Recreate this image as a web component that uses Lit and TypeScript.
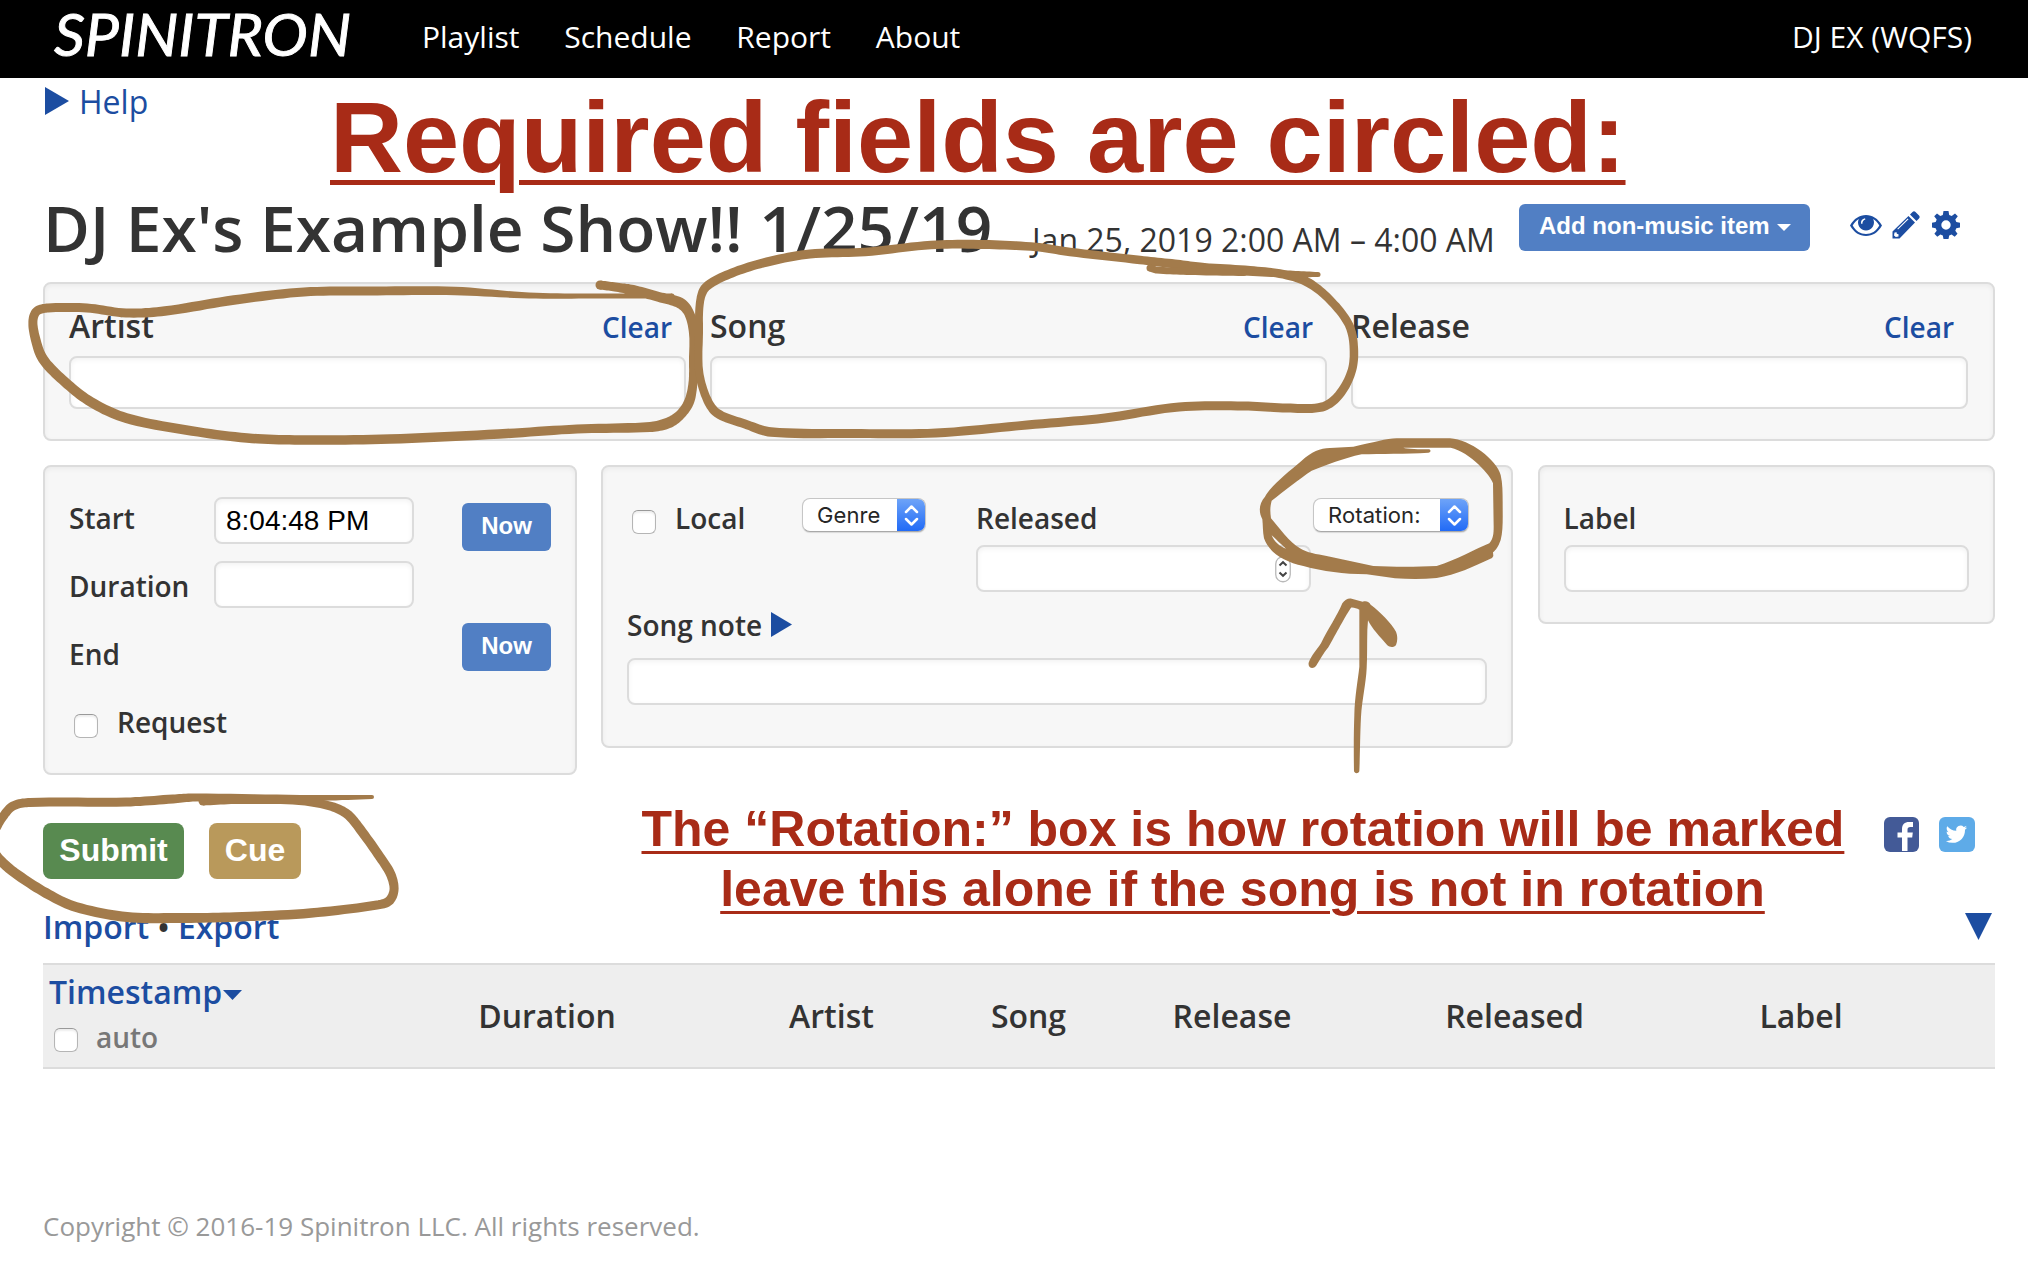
import { LitElement, html, css, svg } from "lit";
import { customElement, property } from "lit/decorators.js";

type Pt = [number, number, number];

/* Hand-drawn strokes: x, y and pen width at each point. */
const STROKES: Pt[][] = [
  [[600, 285, 9], [615, 287, 9], [633, 290, 10], [659, 297, 10], [680, 303, 11], [689, 313, 10], [694, 333, 10], [694, 360, 10], [693, 383, 9], [689, 402, 10], [680, 415, 10], [668, 423, 11], [650, 427, 10], [577, 429, 9], [499, 434, 9.5], [390, 439, 9.5], [300, 440, 9.5], [247, 438, 9.5], [186, 430, 9.5], [126, 418, 10], [91, 402, 10], [65, 382, 10], [43, 359, 10], [35, 337, 9.5], [33, 320, 9], [37, 311, 9], [48, 308, 9], [87, 308, 9], [126, 313, 9], [165, 311, 9.5], [234, 300, 9.5], [304, 292, 9], [369, 291, 9], [455, 291, 8.5], [529, 295.5, 6], [600, 296, 5], [672, 296, 5]],
  [[1318, 274.5, 5], [1290, 274, 7], [1244, 271, 9], [1200, 267, 9], [1175, 264, 9], [1140, 260, 8.5], [1070, 252, 8.5], [1036, 247, 8.500], [984, 244.5, 9], [931, 245, 8.5], [865, 252, 8.5], [810, 254, 9], [767, 262, 9], [732, 273, 9], [706, 287, 9], [700, 302, 8], [699, 333, 8], [699, 370, 8], [706, 397, 8.5], [717, 413, 9], [745, 424, 9], [771, 432, 9.5], [853, 433.5, 9], [936, 433, 9], [1027, 425, 9], [1105, 418, 9], [1179, 407, 9], [1244, 406, 9], [1287, 408, 9], [1322, 407, 9], [1339, 395, 9], [1352, 370, 8.5], [1353.5, 343, 8.5], [1348, 323, 8.5], [1330, 300, 8.500], [1309, 283, 9], [1287, 275, 9], [1250, 270, 8], [1200, 267, 8]],
  [[1150, 268, 7], [1157, 270, 7], [1190, 271.5, 7], [1244, 273, 6]],
  [[372, 797, 4], [312, 798, 6], [195, 797.500, 8], [173, 799, 9], [126, 802, 9], [30, 802.5, 9], [13, 806, 9], [2, 818, 9], [-6, 832, 9]],
  [[203, 801, 9], [238, 800, 8], [299, 801, 8], [330, 806, 9], [347, 814, 9.5], [360, 829, 9.5], [382, 860, 9.5], [391, 875, 9.500], [394, 890, 9], [389, 901, 9.5], [377, 905, 9], [311, 913, 9.5], [235, 917, 9.5], [180, 918, 10], [127, 917, 10], [76, 907, 10], [46, 893, 10], [15, 873, 10], [0, 860, 10], [-8, 850, 10]],
];

/* The ring and arrow around the rotation menu, drawn at three times their size. */
const RING = `M340 50C400 38 440 25 470 25L630 25C690 28 770 90 782 135C788 160 788 190 788 215C788 260 790 300 782 330C775 350 768 360 759 367L760 378Q757 387 748 388C700 410 650 435 590 444C550 448 510 448 465 445L380 433C310 432 250 424 190 408C130 395 85 365 72 325C68 305 69 285 67 268C55 245 57 220 75 200C90 170 140 130 185 92C215 65 240 55 270 54Z
M365 73C310 85 260 105 215 122C180 145 130 185 95 212C90 230 90 245 93 265C115 290 150 340 180 355C200 368 230 373 260 378L400 408C460 411 530 411 590 408C650 390 710 355 748 340C760 325 761 310 761 290L759 160C755 140 690 65 632 53L490 53C500 57 540 58 568 58C574 62 572 67 565 68C500 72 420 71 365 73Z
M95 316C105 325 125 345 138 356C120 350 102 335 95 316Z`;
const ARROW = `M206 698C215 675 230 660 243 640C265 595 290 560 307 520C315 508 325 504 335 506L368 515C380 512 388 516 392 524C420 545 455 580 468 605C474 620 472 635 468 645C462 653 450 653 442 646C420 620 395 595 384 571L382 600C381 640 382 680 380 715C378 760 366 810 363 860C360 920 360 980 358 1024C355 1032 345 1032 342 1024C341 970 341 910 343 855C344 800 354 750 358 710L358 539C350 536 342 532 333 533C315 560 300 590 265 652C250 670 240 690 228 708C220 718 203 715 206 698Z`;

/* Run a smooth curve through the points and return the outline of the pen. */
function outline(pts: Pt[]): string {
  const n = pts.length;
  const dist = (a: Pt, b: Pt) => Math.hypot(a[0] - b[0], a[1] - b[1]);
  const slope = pts.map((_, i) => {
    const p = pts[Math.max(0, i - 1)], c = pts[i], q = pts[Math.min(n - 1, i + 1)];
    const len = dist(p, c) + dist(c, q);
    return [0, 1, 2].map((j) => (q[j] - p[j]) / len);
  });
  const s: Pt[] = [];
  for (let i = 0; i < n - 1; i++) {
    const a = pts[i], b = pts[i + 1], d = dist(a, b);
    for (let k = 0; k < 10; k++) {
      const t = k / 10, t2 = t * t, t3 = t2 * t;
      s.push([0, 1, 2].map((j) =>
        (2 * t3 - 3 * t2 + 1) * a[j] + (t3 - 2 * t2 + t) * d * slope[i][j] +
        (3 * t2 - 2 * t3) * b[j] + (t3 - t2) * d * slope[i + 1][j]) as Pt);
    }
  }
  s.push(pts[n - 1]);
  const f = (v: number) => v.toFixed(1);
  const l: string[] = [], r: string[] = [];
  s.forEach((p, i) => {
    const q = s[Math.max(0, i - 1)], e = s[Math.min(s.length - 1, i + 1)];
    const dx = e[0] - q[0], dy = e[1] - q[1], d = Math.hypot(dx, dy) || 1, w = p[2] / 2;
    l.push(`${f(p[0] - (dy / d) * w)} ${f(p[1] + (dx / d) * w)}`);
    r.unshift(`${f(p[0] + (dy / d) * w)} ${f(p[1] - (dx / d) * w)}`);
  });
  return `M${l.concat(r).join("L")}Z`;
}

@customElement("mac-select")
class MacSelect extends LitElement {
  @property() label = "";
  static styles = css`
    :host { display: block; }
    .box { display: flex; height: 34px; box-sizing: border-box; background: #fff; border-radius: 8px; border: 1px solid #c6c6c6; border-bottom-color: #a9a9a9; box-shadow: 0 1px 1px rgba(0,0,0,.12); overflow: hidden; justify-content: space-between; }
    .text { font: 22px/47px Inter, sans-serif; margin-top: -7px; color: #262626; padding-left: 14px; letter-spacing: .1px; white-space: nowrap; }
    .knob { width: 29px; background: linear-gradient(#70a5f8, #1f69f6); margin: -1px; height: 34px; }
  `;
  render() {
    return html`<div class="box"><span class="text">${this.label}</span>
      <svg class="knob" viewBox="0 0 29 34"><path d="M9 14 14.5 8.5 20 14M9 21 14.5 26.5 20 21" fill="none" stroke="#fff" stroke-width="2.5" stroke-linecap="round" stroke-linejoin="round"/></svg></div>`;
  }
}

@customElement("app-root")
class AppRoot extends LitElement {
  static styles = css`
    :host { display: block; position: relative; width: 2028px; height: 1284px; overflow: hidden; background: #fff; color: #333; font: 600 32px/44px "Open Sans", sans-serif; }
    * { box-sizing: border-box; }
    a { color: #1c4da1; text-decoration: none; }
    svg { display: block; }
    header { display: flex; background: #000; height: 78px; padding-left: 50px; }
    header a { color: #fff; font-weight: 400; font-size: 30px; line-height: 73px; }
    .logo { width: 310px; height: 78px; margin-right: 62px; fill: #fff; stroke: #fff; stroke-width: .9px; font: italic 400 58px Lato, sans-serif; flex: none; }
    nav { display: flex; gap: 44.8px; flex: 1; }
    .user { padding-right: 56px; }
    main { padding: 0 33px 0 43px; }
    .help { display: flex; height: 48px; line-height: 48px; gap: 10px; font-weight: 400; padding-left: 2px; margin-bottom: 61px; }
    .help svg { margin-top: 9px; }
    .title { display: grid; grid-template-columns: 989px 487px 331px auto; height: 80px; margin-bottom: 15px; align-items: baseline; }
    h1 { margin: 0; font-size: 64px; line-height: 81px; font-weight: 600; white-space: nowrap; }
    .date { font-weight: 400; white-space: nowrap; }
    .btn { background: #517fc4; color: #fff; border-radius: 6px; font: bold 24px/48px "Liberation Sans", Arial, sans-serif; text-align: center; white-space: nowrap; }
    .add { align-self: start; margin-top: 17px; width: 291px; height: 47px; line-height: 43px; display: flex; padding-left: 20px; gap: 7px; }
    .add svg { margin-top: 20px; }
    .tools { align-self: start; margin-top: 24px; display: flex; fill: #1c4da1; }
    .tools svg + svg { margin-left: 10px; }
    .tools svg:last-child { margin-left: 12px; }
    .panel { background: #f7f7f7; border: 2px solid #dcdcdc; border-radius: 8px; box-shadow: inset 0 2px 5px rgba(0,0,0,.05); padding: 17px 24px 0; }
    .field { background: #fff; border: 2px solid #dcdcdc; border-radius: 8px; box-shadow: inset 0 2px 5px rgba(0,0,0,.05); height: 47px; }
    .search { height: 159px; display: grid; grid-template-columns: repeat(3, 617px); gap: 24px; margin-bottom: 24px; padding-top: 20px; }
    .search .field { height: 53px; margin-top: 7px; }
    .cap { display: flex; justify-content: space-between; align-items: baseline; padding-right: 14px; }
    .cap a { font-size: 28px; }
    .lower { display: grid; grid-template-columns: 533.5px 912px 457.5px; gap: 24.5px; align-items: start; font-size: 28px; height: 352px; }
    .time { height: 310px; display: grid; grid-template-columns: 145px 200px 89px; }
    .time > :nth-child(3) { margin-left: 48px; width: 89px; }
    .row { height: 68px; line-height: 69px; white-space: nowrap; }
    .chk { display: flex; gap: 19px; padding-left: 5px; }
    .box { width: 24px; height: 24px; border: 1.5px solid #b5b5b5; border-top-color: #999; border-radius: 6px; background: #fff; box-shadow: inset 0 2px 2px rgba(0,0,0,.07); margin-top: 26px; flex: none; }
    .ins { padding-top: 13px; }
    .ins .field + .field { margin-top: 17px; }
    .start { font: 28px/43px "Liberation Sans", Arial, sans-serif; color: #000; padding-left: 10px; }
    .nows { padding-top: 19px; }
    .nows .btn { height: 48px; line-height: 45px; }
    .nows .btn + .btn { margin-top: 72px; }
    .mid { height: 283px; }
    .top { display: grid; grid-template-columns: 175px 174px 335px 156px; height: 108px; }
    .top mac-select { margin-top: 14px; }
    .genre { width: 124px; }
    .rot { margin-left: 2px; width: 156px; }
    .released .field { margin-top: -7px; padding: 9px 0 0 297px; }
    .note { display: flex; gap: 9px; line-height: 67px; height: 66px; }
    .note svg { margin-top: 20px; }
    .lab { height: 159px; }
    .lab .field { margin-top: -7px; }
    .actions { display: flex; height: 62px; margin-bottom: 26px; }
    .actions .btn { margin-top: 6px; height: 56px; border-radius: 8px; font-size: 32px; line-height: 55px; }
    .submit { background: #588a50; width: 141px; }
    .cue { background: #b9995b; width: 92px; margin-left: 25px; }
    .social { margin-left: auto; display: flex; gap: 20px; padding-right: 20px; }
    .io { display: flex; justify-content: space-between; height: 44px; margin-bottom: 14px; white-space: pre; }
    .io svg { margin: 8px 3px 0 0; }
    .table { height: 106px; background: #eee; border: solid #dcdcdc; border-width: 2px 0; display: grid; grid-template-columns: 318px 372px 197px 197px 210px 355px 218px; text-align: center; line-height: 102px; }
    .stamp { text-align: left; line-height: 44px; padding: 5px 0 0 6px; }
    .stamp a { display: flex; gap: 1px; }
    .stamp svg { margin-top: 20px; }
    .auto { display: flex; gap: 18px; padding-left: 5px; color: #777; font-size: 28px; line-height: 46px; }
    .auto .box { margin-top: 14px; }
    footer { font-size: 26px; font-weight: 400; color: #999; margin-top: 135px; line-height: 45px; }
    .ink { position: absolute; left: 0; top: 0; fill: #a37b4b; }
    .memo { position: absolute; color: #a82b17; font: bold 101px/110px "Liberation Sans", Arial, sans-serif; text-decoration: underline; white-space: nowrap; }
    .big { left: 330px; top: 82px; letter-spacing: -.04px; text-decoration-thickness: 5px; text-underline-offset: 8px; }
    .small { font-size: 50px; line-height: 60px; left: 641.5px; top: 799px; width: 1202px; text-align: center; text-decoration-thickness: 3px; text-underline-offset: 5px; }
  `;

  render() {
    const tri = (w: number, h: number, d: string) => html`<svg width=${w} height=${h} viewBox="0 0 ${w} ${h}" fill="#1c4da1"><path d=${d} /></svg>`;
    return html`
      <header>
        <svg class="logo" viewBox="0 0 310 78"><text x="4" y="55.5" textLength="297" lengthAdjust="spacingAndGlyphs">SPINITRON</text></svg>
        <nav><a>Playlist</a><a>Schedule</a><a>Report</a><a>About</a></nav>
        <a class="user">DJ EX (WQFS)</a>
      </header>
      <main>
        <a class="help">${tri(24, 28, "M0 0L24 14L0 28Z")}Help</a>
        <div class="title">
          <h1>DJ Ex's Example Show!! 1/25/19</h1>
          <span class="date">Jan 25, 2019 2:00 AM – 4:00 AM</span>
          <div class="btn add">Add non-music item<svg width="14" height="7" fill="#fff"><path d="M0 0H14L7 7Z" /></svg></div>
          <div class="tools">
            <svg width="32" height="28" viewBox="0 0 32 28"><path fill-rule="evenodd" d="M0 14.500C4 7.500 9.500 4 16 4S28 7.500 32 14.500C28 21.500 22.500 25 16 25S4 21.500 0 14.500ZM2.700 14.500C6 20.200 10.500 23 16 23S26 20.200 29.300 14.500C27.700 11.500 25.600 9.300 23.200 7.900A8 8 0 1 1 8.800 7.900C6.400 9.300 4.300 11.500 2.700 14.500ZM15 7.200A5 5 0 0 0 11 12.500L12.300 13C12.500 10.500 13.500 9 15.400 8.500Z"/></svg>
            <svg width="28" height="28" viewBox="0 0 28 28"><path fill-rule="evenodd" d="M20.500 1Q22 -.4 23.500 1L27 4.500Q28.300 6 27 7.500L24.500 10L18 3.500ZM16.500 5L23 11.500L7.500 27.500H.5V20.500ZM2.500 21.500L2 24.500L3.800 26L6.500 25.500V23.200L4.800 22.800L4.600 21.200ZM6 18.500L16.500 8.300L15.700 7.600L5.300 17.800Z"/></svg>
            <svg width="28" height="28" viewBox="0 0 28 28"><path fill-rule="evenodd" d="M11.500 0H16.500L17.200 4L19.700 5L23 2.500L25.800 5.200L23.300 8.500L24.300 11L28 11.700V16.500L24.300 17.200L23.300 19.700L25.500 22.800L22.700 25.700L19.600 23.400L17.200 24.400L16.500 28H11.500L10.800 24.400L8.400 23.400L5.300 25.700L2.400 22.800L4.700 19.700L3.700 17.200L0 16.500V11.700L3.700 11L4.700 8.500L2.200 5.200L5 2.500L8.300 5L10.800 4ZM14 9.300A4.700 4.700 0 1 0 14 18.700A4.700 4.700 0 1 0 14 9.300Z"/></svg>
          </div>
        </div>
        <section class="panel search">
          ${["Artist", "Song", "Release"].map((t) => html`<div><div class="cap"><span>${t}</span><a>Clear</a></div><div class="field"></div></div>`)}
        </section>
        <section class="lower">
          <div class="panel time">
            <div>
              <div class="row">Start</div><div class="row">Duration</div><div class="row">End</div>
              <div class="row chk"><i class="box"></i>Request</div>
            </div>
            <div class="ins"><div class="field start">8:04:48 PM</div><div class="field"></div></div>
            <div class="nows"><div class="btn">Now</div><div class="btn">Now</div></div>
          </div>
          <div class="panel mid">
            <div class="top">
              <div class="row chk"><i class="box"></i>Local</div>
              <mac-select class="genre" label="Genre"></mac-select>
              <div class="released"><div class="row">Released</div>
                <div class="field"><svg width="16" height="27" viewBox="0 0 16 27"><rect x=".75" y=".75" width="14.500" height="25" rx="7.200" fill="#fff" stroke="#b9b9b9" stroke-width="1.300"/><path d="M4.500 9.500L8 6.200L11.500 9.500M4.500 16.500L8 19.800L11.500 16.500" fill="none" stroke="#444" stroke-width="2"/></svg></div></div>
              <mac-select class="rot" label="Rotation:"></mac-select>
            </div>
            <div class="note">Song note${tri(21, 25, "M0 0L21 12.5L0 25Z")}</div>
            <div class="field"></div>
          </div>
          <div class="panel lab"><div class="row">Label</div><div class="field"></div></div>
        </section>
        <div class="actions">
          <div class="btn submit">Submit</div><div class="btn cue">Cue</div>
          <div class="social">
            <svg width="35" height="35" viewBox="0 0 35 35"><rect width="35" height="35" rx="6" fill="#435a97"/><path fill="#fff" d="M18 34V20.500H13.500V15.500H18V12C18 7.500 20.700 5 25 5H29V10H26.300C24.300 10 23.500 11 23.500 12.700V15.500H28.800L28.200 20.500H23.500V34Z"/></svg>
            <svg width="36" height="35" viewBox="0 0 36 35"><rect width="36" height="35" rx="6" fill="#5eabe8"/><path fill="#fff" transform="translate(6.800 6.500) scale(.89)" d="M23.950 4.570a10 10 0 01-2.820.770 4.960 4.960 0 002.160-2.720c-.95.550-2 .960-3.130 1.180a4.920 4.920 0 00-8.380 4.480C7.690 8.100 4.070 6.130 1.640 3.160a4.820 4.820 0 00-.67 2.480c0 1.710.870 3.210 2.190 4.100a4.900 4.900 0 01-2.230-.62v.060a4.920 4.920 0 003.950 4.830 5 5 0 01-2.210.080 4.940 4.940 0 004.600 3.420A9.870 9.870 0 010 19.540a14 14 0 007.550 2.210c9.050 0 14-7.500 14-13.980 0-.21 0-.42-.02-.63a9.940 9.940 0 002.460-2.550z"/></svg>
          </div>
        </div>
        <div class="io"><span><a>Import</a> • <a>Export</a></span>${tri(27, 27, "M0 0H27L13.5 27Z")}</div>
        <div class="table">
          <div class="stamp"><a>Timestamp${tri(19, 10, "M0 0H19L9.500 10Z")}</a><div class="auto"><i class="box"></i>auto</div></div>
          ${["Duration", "Artist", "Song", "Release", "Released", "Label"].map((t) => html`<span>${t}</span>`)}
        </div>
        <footer>Copyright © 2016-19 Spinitron LLC. All rights reserved.</footer>
      </main>
      <svg class="ink" width="2028" height="1284">
        ${STROKES.map((s) => {
          const e = s[s.length - 1];
          return svg`<path d=${outline(s)} /><circle cx=${s[0][0]} cy=${s[0][1]} r=${s[0][2] / 2} /><circle cx=${e[0]} cy=${e[1]} r=${e[2] / 2} />`;
        })}
        <g transform="translate(1240 430) scale(.33333)"><path fill-rule="evenodd" d=${RING} /><path d=${ARROW} /></g>
      </svg>
      <div class="memo big">Required fields are circled:</div>
      <div class="memo small">The “Rotation:” box is how rotation will be marked<br />leave this alone if the song is not in rotation</div>
    `;
  }
}
